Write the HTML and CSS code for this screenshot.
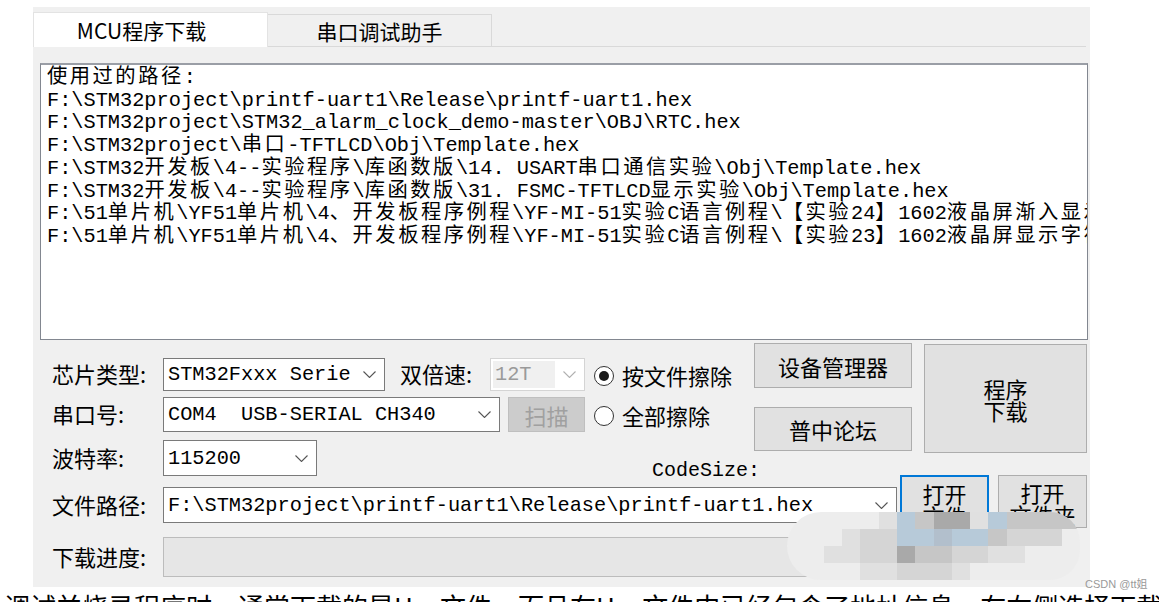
FILE: index.html
```html
<!DOCTYPE html>
<html lang="zh-CN">
<head>
    <meta charset="UTF-8">
    <title>MCU程序下载</title>
    <link rel="stylesheet" href="styles.css">
</head>
<body>
    <div class="window">
        <div class="tabs">
            <div class="tab active">MCU程序下载</div>
            <div class="tab idle">串口调试助手</div>
            <div class="tab-rest"></div>
        </div>

        <!-- history of used files -->
        <div class="listbox"><div><span class="cn">使用过的路径</span>:</div><div>F:\STM32project\printf-uart1\Release\printf-uart1.hex</div><div>F:\STM32project\STM32_alarm_clock_demo-master\OBJ\RTC.hex</div><div>F:\STM32project\<span class="cn">串口</span>-TFTLCD\Obj\Template.hex</div><div>F:\STM32<span class="cn">开发板</span>\4--<span class="cn">实验程序</span>\<span class="cn">库函数版</span>\14. USART<span class="cn">串口通信实验</span>\Obj\Template.hex</div><div>F:\STM32<span class="cn">开发板</span>\4--<span class="cn">实验程序</span>\<span class="cn">库函数版</span>\31. FSMC-TFTLCD<span class="cn">显示实验</span>\Obj\Template.hex</div><div>F:\51<span class="cn">单片机</span>\YF51<span class="cn">单片机</span>\4<span class="cn">、开发板程序例程</span>\YF-MI-51<span class="cn">实验</span>C<span class="cn">语言例程</span>\<span class="cn">【实验</span>24<span class="cn">】</span>1602<span class="cn">液晶屏渐入显示</span></div><div>F:\51<span class="cn">单片机</span>\YF51<span class="cn">单片机</span>\4<span class="cn">、开发板程序例程</span>\YF-MI-51<span class="cn">实验</span>C<span class="cn">语言例程</span>\<span class="cn">【实验</span>23<span class="cn">】</span>1602<span class="cn">液晶屏显示字符</span></div></div>

        <div class="upper">
            <div class="settings">
                <div class="row row-1">
                    <div class="lbl">芯片类型:</div>
                    <div class="combo w-chip"><span>STM32Fxxx Serie</span><svg class="arrow" viewBox="0 0 13 7"><polyline points="0.5,0.5 6.5,6.5 12.5,0.5"/></svg></div>
                    <div class="lbl lbl-speed">双倍速:</div>
                    <div class="combo combo-off w-speed"><span class="off-val">12T</span><svg class="arrow" viewBox="0 0 13 7"><polyline points="0.5,0.5 6.5,6.5 12.5,0.5"/></svg></div>
                    <div class="radio"><span class="dot on"></span>按文件擦除</div>
                </div>
                <div class="row row-2">
                    <div class="lbl">串口号:</div>
                    <div class="combo w-port"><span>COM4  USB-SERIAL CH340</span><svg class="arrow" viewBox="0 0 13 7"><polyline points="0.5,0.5 6.5,6.5 12.5,0.5"/></svg></div>
                    <div class="btn btn-off">扫描</div>
                    <div class="radio"><span class="dot"></span>全部擦除</div>
                </div>
                <div class="row row-3">
                    <div class="lbl">波特率:</div>
                    <div class="combo w-baud"><span>115200</span><svg class="arrow" viewBox="0 0 13 7"><polyline points="0.5,0.5 6.5,6.5 12.5,0.5"/></svg></div>
                    <div class="codesize">CodeSize:</div>
                </div>
            </div>
            <div class="side">
                <div class="btn btn-dev">设备管理器</div>
                <div class="btn btn-forum">普中论坛</div>
            </div>
            <div class="btn big">程序<br>下载</div>
        </div>

        <div class="lower">
            <div class="files">
                <div class="row row-4">
                    <div class="lbl">文件路径:</div>
                    <div class="combo w-path"><span>F:\STM32project\printf-uart1\Release\printf-uart1.hex</span><svg class="arrow" viewBox="0 0 13 7"><polyline points="0.5,0.5 6.5,6.5 12.5,0.5"/></svg></div>
                </div>
                <div class="row row-5">
                    <div class="lbl">下载进度:</div>
                    <div class="bar"></div>
                </div>
            </div>
            <div class="btn open-file focus">打开<br>文件</div>
            <div class="btn open-dir">打开<br>文件夹</div>
        </div>

        <!-- pixelated blur over the screenshot -->
        <div class="mosaic">
            <span class="p0"></span><span class="p0"></span><span class="p0"></span><span class="p0"></span><span class="p0"></span><span class="p1"></span><span class="p4"></span><span class="p2"></span><span class="p3"></span><span class="p3"></span><span class="p1"></span><span class="p4"></span><span class="p2"></span><span class="p2"></span><span class="p2"></span><span class="p2"></span>
            <span class="p0"></span><span class="p0"></span><span class="p0"></span><span class="p1"></span><span class="p5"></span><span class="p5"></span><span class="p4"></span><span class="p4"></span><span class="p6"></span><span class="p4"></span><span class="p4"></span><span class="p2"></span><span class="p5"></span><span class="p5"></span><span class="p5"></span><span class="p0"></span>
            <span class="p0"></span><span class="p0"></span><span class="p1"></span><span class="p1"></span><span class="p5"></span><span class="p5"></span><span class="p3"></span><span class="p2"></span><span class="p2"></span><span class="p5"></span><span class="p5"></span><span class="p1"></span><span class="p1"></span><span class="p0"></span><span class="p0"></span><span class="p0"></span>
            <span class="p0"></span><span class="p0"></span><span class="p0"></span><span class="p0"></span><span class="p1"></span><span class="p1"></span><span class="p5"></span><span class="p5"></span><span class="p5"></span><span class="p1"></span><span class="p0"></span><span class="p0"></span><span class="p0"></span><span class="p0"></span><span class="p0"></span><span class="p0"></span>
        </div>
    </div>

    <p class="caption">调试并烧录程序时，通常下载的是Hex文件，而且在Hex文件中已经包含了地址信息，在右侧选择下载</p>
    <div class="watermark">CSDN @tt姐</div>
</body>
</html>
```

FILE: styles.css
```css
body {
    margin: 0;
    height: 602px;
    overflow: hidden;
    background: #ffffff;
    font-family: "Noto Sans CJK SC", sans-serif;
    color: #000;
}
.window {
    position: relative;
    width: 1057px;
    height: 580px;
    margin: 7px 0 0 33px;
    background: #f0f0f0;
}

/* tab strip */
.tabs {
    display: flex;
    align-items: flex-end;
    height: 40px;
}
.tab {
    box-sizing: border-box;
    display: flex;
    align-items: center;
    justify-content: center;
    font-size: 21px;
}
.tab.active {
    width: 235px;
    height: 35px;
    padding-right: 18px;
    background: #fff;
    border: 1px solid #e3e3e3;
    border-bottom: none;
}
.tab.idle {
    width: 224px;
    height: 33px;
    border: 1px solid #d9d9d9;
    border-left: none;
}
.tab-rest {
    flex: 1;
    margin-right: 4px;
    border-bottom: 1px solid #d9d9d9;
}

/* used paths */
.listbox {
    box-sizing: border-box;
    height: 277px;
    margin: 16px 2px 0 7px;
    padding: 2px 0 0 6px;
    background: #fff;
    border: 1px solid #828790;
    border-top: 2px solid #9a9ea6;
    font: 20.3px/22.7px "Liberation Mono", "Noto Sans CJK SC", monospace;
    white-space: pre;
    overflow: hidden;
}
.cn {
    letter-spacing: 2.5px;
}

/* settings area */
.upper {
    display: flex;
    height: 135px;
}
.settings {
    width: 702px;
    padding: 18px 0 0 19px;
}
.row {
    display: flex;
    align-items: center;
}
.row-1 { height: 33px; }
.row-2 { height: 35px; margin-top: 6px; }
.row-3 { height: 36px; margin-top: 8px; }
.lbl {
    flex: none;
    width: 111px;
    margin-top: -3px;
    font-size: 22px;
    line-height: 26px;
    white-space: nowrap;
}
.lbl-speed {
    width: 90px;
    margin-left: 15px;
}
.combo {
    flex: none;
    box-sizing: border-box;
    display: flex;
    align-items: center;
    justify-content: space-between;
    height: 100%;
    padding: 0 8px 0 4px;
    background: #fff;
    border: 1px solid #7a7a7a;
    font: 20.3px "Liberation Mono", "Noto Sans CJK SC", monospace;
    white-space: pre;
    overflow: hidden;
}
.arrow {
    flex: none;
    width: 13px;
    height: 7px;
    fill: none;
    stroke: #555;
    stroke-width: 1.1;
}
.w-chip { width: 222px; }
.w-speed { width: 95px; }
.w-port { width: 337px; }
.w-baud { width: 154px; }
.w-path { width: 734px; }
.combo-off {
    padding: 2px 8px 2px 2px;
    border-color: #d4d4d4;
    color: #9a9a9a;
}
.combo-off .arrow {
    stroke: #b0b0b0;
}
.off-val {
    display: flex;
    align-items: center;
    width: 60px;
    height: 100%;
    padding-left: 2px;
    background: #f0f0f0;
}
.radio {
    display: flex;
    align-items: center;
    gap: 8px;
    margin-left: 9px;
    font-size: 22px;
    white-space: nowrap;
}
.dot {
    box-sizing: border-box;
    display: flex;
    align-items: center;
    justify-content: center;
    width: 20px;
    height: 20px;
    margin-top: 2px;
    border: 1.5px solid #333;
    border-radius: 50%;
    background: #fff;
}
.dot.on::after {
    content: "";
    width: 10px;
    height: 10px;
    border-radius: 50%;
    background: #1a1a1a;
}
.codesize {
    align-self: flex-end;
    margin: 0 0 -7px 335px;
    font: 20px/24px "Liberation Mono", monospace;
}

/* buttons */
.btn {
    box-sizing: border-box;
    display: flex;
    align-items: center;
    justify-content: center;
    background: #e1e1e1;
    border: 1px solid #adadad;
    font-size: 22px;
    text-align: center;
}
.btn-off {
    width: 77px;
    height: 100%;
    margin-left: 8px;
    background: #cccccc;
    border-color: #bfbfbf;
    color: #a0a0a0;
}
.side {
    display: flex;
    flex-direction: column;
    gap: 19px;
    width: 158px;
    padding-top: 3px;
}
.btn-dev { height: 45px; }
.btn-forum { height: 44px; }
.big {
    width: 163px;
    height: 109px;
    margin: 4px 0 0 12px;
    line-height: 22px;
}

/* file row */
.lower {
    display: flex;
    align-items: flex-start;
    height: 112px;
}
.files {
    width: 864px;
    padding-left: 19px;
    box-sizing: border-box;
}
.row-4 { height: 36px; margin-top: 12px; }
.row-5 { height: 40px; margin-top: 14px; }
.bar {
    box-sizing: border-box;
    width: 734px;
    height: 100%;
    background: #e6e6e6;
    border: 1px solid #bcbcbc;
}
.open-file,
.open-dir {
    align-items: flex-start;
    width: 89px;
    padding-top: 5px;
    line-height: 22px;
}
.open-file {
    height: 55px;
    margin-left: 3px;
}
.open-dir {
    height: 53px;
    margin-left: 9px;
}
.focus {
    border: 2px solid #0078d7;
}

/* mosaic blur */
.mosaic {
    position: absolute;
    left: 754px;
    top: 505px;
    width: 293px;
    height: 68px;
    display: grid;
    grid-template-columns: repeat(16, 1fr);
    grid-template-rows: repeat(4, 1fr);
    border-radius: 34px 30px 30px 34px;
    overflow: hidden;
}
.p0 { background: #ededed; }
.p1 { background: #e0e0e0; }
.p2 { background: #c6c6c6; }
.p3 { background: #a9a9a9; }
.p4 { background: #b7cad9; }
.p5 { background: #d5d5d5; }
.p6 { background: #b2bfcc; }

.caption {
    margin: 0;
    padding: 4px 0 0 4px;
    font-size: 26px;
    line-height: 30px;
    white-space: nowrap;
}
.watermark {
    position: absolute;
    left: 1085px;
    top: 575px;
    font: 11px "Liberation Sans", "Noto Sans CJK SC", sans-serif;
    color: #9a9a9a;
}
```
